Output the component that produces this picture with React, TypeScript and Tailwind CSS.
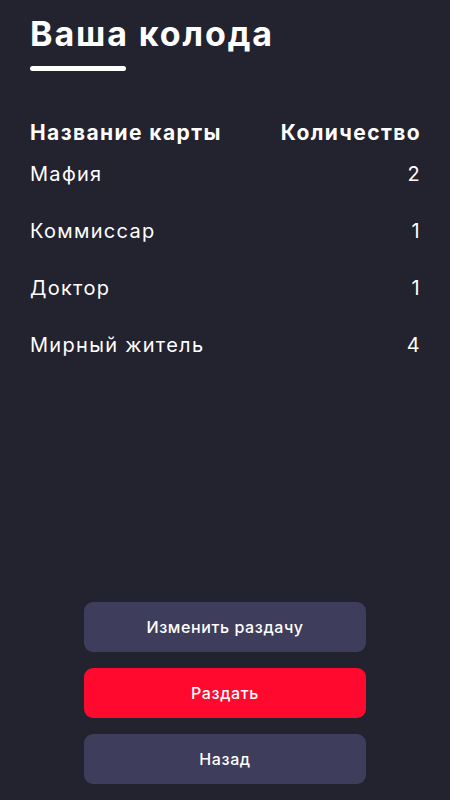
const rows = [
  { name: "Мафия", count: 2 },
  { name: "Коммиссар", count: 1 },
  { name: "Доктор", count: 1 },
  { name: "Мирный житель", count: 4 },
];

const App = () => {
  return (
    <div
      className="h-[800px] bg-[#23222f] text-white flex flex-col px-[30px]"
      style={{ fontFamily: "Inter, 'Noto Sans', sans-serif" }}
    >
      <h1 className="mt-[13px] text-[34px] font-bold leading-[42px] tracking-[1.9px]">
        Ваша колода
      </h1>
      <div className="mt-[11px] w-[96px] h-[5px] rounded-full bg-white" />

      <div className="mt-[48px] h-[27px] flex justify-between items-center text-[21px] font-bold tracking-[1.4px]">
        <span>Название карты</span>
        <span className="-mr-[1px]">Количество</span>
      </div>
      <div className="flex flex-col -mt-[1px]">
        {rows.map((r) => (
          <div
            key={r.name}
            className="flex justify-between items-center h-[57px] text-[20px] tracking-[1.3px]"
          >
            <span>{r.name}</span>
            <span className="-mr-[1px]">{r.count}</span>
          </div>
        ))}
      </div>

      <div className="mt-auto mb-[16px] flex flex-col items-center gap-[16px]">
        <button className="w-[282px] h-[50px] rounded-[9px] bg-[#3f3d5c] text-[16px] font-medium tracking-[0.6px]">
          Изменить раздачу
        </button>
        <button className="w-[282px] h-[50px] rounded-[9px] bg-[#ff0a2e] text-[16px] font-medium tracking-[0.6px]">
          Раздать
        </button>
        <button className="w-[282px] h-[50px] rounded-[9px] bg-[#3f3d5c] text-[16px] font-medium tracking-[0.6px]">
          Назад
        </button>
      </div>
    </div>
  );
};

export default App;
